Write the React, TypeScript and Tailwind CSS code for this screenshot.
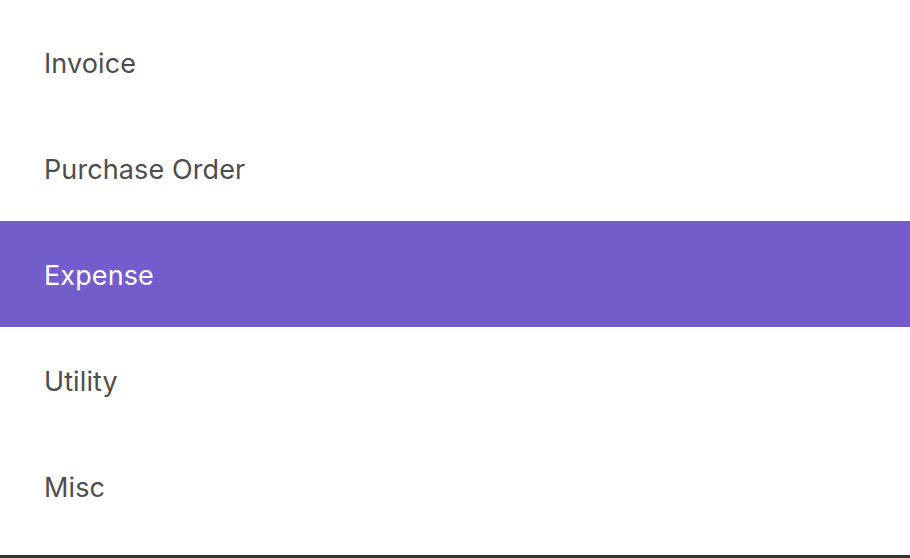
const items = ['Invoice', 'Purchase Order', 'Expense', 'Utility', 'Misc'];

export default function App() {
  const selected = 'Expense';

  return (
    <div
      className="h-[558px] w-[910px] overflow-hidden bg-white"
      style={{ fontFamily: 'Inter, "Noto Sans", sans-serif' }}
    >
      <ul className="flex h-full flex-col border-b-[3px] border-[#333333] pt-[9px]">
        {items.map((item) => (
          <li
            key={item}
            className={
              item === selected
                ? 'flex h-[106px] items-center bg-[#735dca] pl-[44px] pt-[5px] text-[27px] tracking-[0.1px] text-white'
                : 'flex h-[106px] items-center pl-[44px] pt-[5px] text-[27px] tracking-[0.1px] text-[#4d4d4d]'
            }
          >
            {item}
          </li>
        ))}
      </ul>
    </div>
  );
}
